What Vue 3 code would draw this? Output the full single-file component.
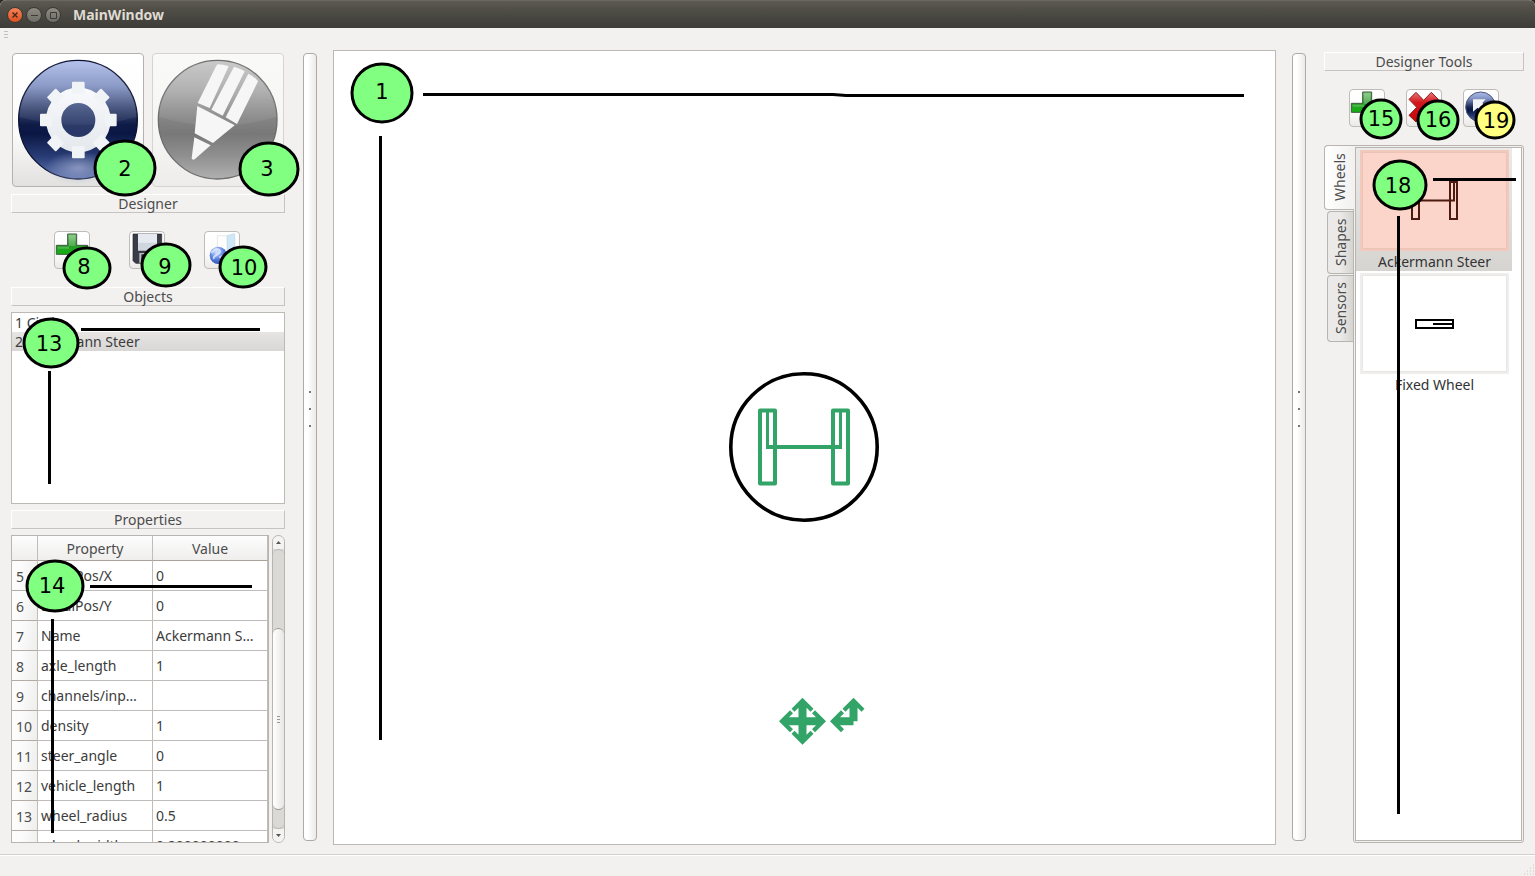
<script setup>
import { ref } from 'vue'

const objects = ['1 Circle', '2 Ackermann Steer']
const selectedObject = ref(1)

const properties = [
  { id: 5, name: 'LocalPos/X', value: '0' },
  { id: 6, name: 'LocalPos/Y', value: '0' },
  { id: 7, name: 'Name', value: 'Ackermann S…' },
  { id: 8, name: 'axle_length', value: '1' },
  { id: 9, name: 'channels/inp…', value: '' },
  { id: 10, name: 'density', value: '1' },
  { id: 11, name: 'steer_angle', value: '0' },
  { id: 12, name: 'vehicle_length', value: '1' },
  { id: 13, name: 'wheel_radius', value: '0.5' },
  { id: 14, name: 'wheel_width', value: '0.200000000' },
]

const tabs = ['Wheels', 'Shapes', 'Sensors']
const activeTab = ref('Wheels')

/* Callouts: n = number, x/y = centre, rx/ry = radii, tx/ty = number position */
const leftNotes = [
  { n: 2, x: 125, y: 168, rx: 30, ry: 27, tx: 125, ty: 176 },
  { n: 3, x: 269, y: 169, rx: 29, ry: 26, tx: 267, ty: 176 },
  { n: 8, x: 87, y: 268, rx: 23, ry: 20, tx: 84, ty: 274 },
  { n: 9, x: 166, y: 265, rx: 24, ry: 21, tx: 165, ty: 274 },
  { n: 10, x: 243, y: 267, rx: 23, ry: 20, tx: 244, ty: 275 },
  { n: 13, x: 51, y: 343, rx: 27, ry: 24, tx: 49, ty: 351 },
  { n: 14, x: 55, y: 586, rx: 28, ry: 25, tx: 52, ty: 593 },
]
const leftLines = ['M81 329.5H260', 'M49.5 371V484', 'M90 586.5H252', 'M52.5 619V833']
const canvasNotes = [{ n: 1, x: 382, y: 93, rx: 30, ry: 29, tx: 382, ty: 99 }]
const canvasLines = ['M423 94.5H833L846 95.5H1244', 'M380.5 136V740']
const rightNotes = [
  { n: 15, x: 1381, y: 119, rx: 20, ry: 19, tx: 1381, ty: 126 },
  { n: 16, x: 1438, y: 120, rx: 20, ry: 19, tx: 1438, ty: 127 },
  { n: 19, x: 1495, y: 120, rx: 19, ry: 18, tx: 1496, ty: 128, yellow: true },
  { n: 18, x: 1400, y: 185, rx: 26, ry: 24, tx: 1398, ty: 193 },
]
const rightLines = ['M1433 179.5H1516', 'M1398.5 216V814']
const teeth = [0, 45, 90, 135, 180, 225, 270, 315]
</script>

<template>
  <div class="window">
    <svg width="0" height="0" class="defs" aria-hidden="true">
      <defs>
        <linearGradient id="blueBall" x1="0" y1="0" x2="0" y2="1">
          <stop offset="0" stop-color="#b0bfeb" />
          <stop offset="0.22" stop-color="#8292c2" />
          <stop offset="0.42" stop-color="#36446f" />
          <stop offset="0.54" stop-color="#0f1c48" />
          <stop offset="0.62" stop-color="#0a1744" />
          <stop offset="0.82" stop-color="#2b3e78" />
          <stop offset="1" stop-color="#5f76b2" />
        </linearGradient>
        <radialGradient id="glow">
          <stop offset="0" stop-color="#a3aed0" stop-opacity="0.7" />
          <stop offset="1" stop-color="#a3aed0" stop-opacity="0" />
        </radialGradient>
        <linearGradient id="greyBall" x1="0" y1="0" x2="0" y2="1">
          <stop offset="0" stop-color="#c6c6c6" />
          <stop offset="0.25" stop-color="#acacac" />
          <stop offset="0.5" stop-color="#838383" />
          <stop offset="0.62" stop-color="#787878" />
          <stop offset="0.8" stop-color="#8f8f8f" />
          <stop offset="1" stop-color="#b0b0b0" />
        </linearGradient>
        <linearGradient id="whiteFade" gradientUnits="userSpaceOnUse" x1="0" y1="86" x2="0" y2="316">
          <stop offset="0" stop-color="#fafbfe" />
          <stop offset="1" stop-color="#e2e6ea" />
        </linearGradient>
        <linearGradient id="greenFade" x1="0" y1="0" x2="0" y2="1">
          <stop offset="0" stop-color="#7cc47a" />
          <stop offset="0.35" stop-color="#2c9a2c" />
          <stop offset="0.6" stop-color="#12b012" />
          <stop offset="1" stop-color="#0a7d0a" />
        </linearGradient>
        <linearGradient id="redFade" x1="0" y1="0" x2="0" y2="1">
          <stop offset="0" stop-color="#e8777a" />
          <stop offset="0.35" stop-color="#d3161b" />
          <stop offset="1" stop-color="#c4060b" />
        </linearGradient>
        <radialGradient id="globe" cx="0.4" cy="0.3" r="0.8">
          <stop offset="0" stop-color="#dbe7ff" />
          <stop offset="0.5" stop-color="#5b83e0" />
          <stop offset="1" stop-color="#1c3fae" />
        </radialGradient>
        <g id="plusIcon">
          <path d="M41 9h27v34h33v27H68v33H41V70H7V43h34z" fill="url(#greenFade)" stroke="#3b5a3b" stroke-width="3" stroke-linejoin="round" />
          <path d="M45 13h19v32H45zM11 47h34v6H11z" fill="#fff" opacity="0.2" />
        </g>
        <g id="arrowHead">
          <path d="M0 -23.5L11 -12.5L8 -9.5L4 -13.5V0H-4V-13.5L-8 -9.5L-11 -12.5Z" />
        </g>
      </defs>
    </svg>

    <header class="titlebar">
      <button class="wm close" aria-label="Close">
        <svg width="14" height="14" viewBox="0 0 14 14"><path d="M4.500 4.500l5 5M9.500 4.500l-5 5" stroke="#4e2a1a" stroke-width="1.500" /></svg>
      </button>
      <button class="wm" aria-label="Minimize">
        <svg width="14" height="14" viewBox="0 0 14 14"><path d="M4 7.500h7" stroke="#3c3b37" /></svg>
      </button>
      <button class="wm" aria-label="Maximize">
        <svg width="14" height="14" viewBox="0 0 14 14"><path d="M4.500 4.500h6v6h-6z" fill="none" stroke="#3c3b37" /></svg>
      </button>
      <h1>MainWindow</h1>
    </header>

    <div class="toolbar"><span class="grip"><i></i><i></i><i></i></span></div>

    <main class="workspace">
      <section class="left">
        <div class="modes">
          <button class="mode" aria-label="Settings mode">
            <svg viewBox="3 3 390 396">
              <circle cx="198" cy="200" r="178" fill="url(#blueBall)" stroke="#0b1130" stroke-width="4" />
              <path d="M22 192Q198 240 374 192V170Q374 24 198 24T22 170Z" fill="#fff" opacity="0.07" />
              <ellipse cx="198" cy="345" rx="100" ry="50" fill="url(#glow)" />
              <circle cx="199" cy="201" r="52" fill="#5a6a9c" opacity="0.4" />
              <circle cx="199" cy="201" r="74" fill="none" stroke="url(#whiteFade)" stroke-width="46" />
              <rect v-for="t in teeth" :key="t" x="180" y="86" width="38" height="36" rx="3" fill="#f1f4f7" :transform="`rotate(${t} 199 201)`" />
            </svg>
          </button>
          <button class="mode faded" aria-label="Designer mode">
            <svg viewBox="3 3 390 396">
              <circle cx="197" cy="200" r="178" fill="url(#greyBall)" stroke="#6d6d6d" stroke-width="4" />
              <path d="M21 192Q197 244 373 192V170Q372 24 197 24T21 170Z" fill="#fff" opacity="0.07" />
              <g fill="#f6f6f6">
                <path d="M197 34Q213 34 230 40L173 165L137 150L193 38Z" />
                <path d="M246 41Q264 46 278 55L212 188L178 170Z" />
                <path d="M289 62Q307 70 318 85L255 213L221 193Z" />
                <path d="M136 159L248 217L183 270L128 241Z" />
                <path d="M127 253L176 277L128 319Q121 322 119 316Z" />
              </g>
            </svg>
          </button>
        </div>

        <h2 class="caption">Designer</h2>
        <div class="tools">
          <button class="tool" aria-label="New"><svg viewBox="3 3 102 108"><use href="#plusIcon" /></svg></button>
          <button class="tool" aria-label="Save">
            <svg viewBox="3 3 102 108">
              <path d="M12 9h86v88H20l-8-8z" fill="#3a3d47" stroke="#22242b" stroke-width="2" />
              <path d="M27 9h57v50H27z" fill="#d0d6e0" />
              <path d="M27 9h57v26H27z" fill="#e6e9f0" />
              <path d="M31 66h50v31H31z" fill="#b9bec8" />
              <path d="M37 70h13v22H37z" fill="#2a2c33" />
            </svg>
          </button>
          <button class="tool" aria-label="Open">
            <svg viewBox="3 3 102 108">
              <path d="M40 14h30v70H40z" fill="#fdfdfe" stroke="#dcdfe4" stroke-width="2" />
              <path d="M70 14l22-6v70l-22 14z" fill="#cfe8f8" stroke="#b7d7ea" stroke-width="2" />
              <circle cx="43" cy="73" r="26" fill="url(#globe)" />
              <path d="M22 66q12-16 22-10t-4 14t-10 14M46 80q14-8 20 0" fill="none" stroke="#e6eeff" stroke-width="6" opacity="0.75" />
            </svg>
          </button>
        </div>

        <h2 class="caption">Objects</h2>
        <ul class="objects">
          <li v-for="(o, i) in objects" :key="o" :class="{ on: i === selectedObject }" @click="selectedObject = i">{{ o }}</li>
        </ul>

        <h2 class="caption">Properties</h2>
        <div class="props">
          <div class="tablebox">
            <table>
              <colgroup><col class="c0" /><col /><col /></colgroup>
              <thead><tr><th></th><th>Property</th><th>Value</th></tr></thead>
              <tbody>
                <tr v-for="p in properties" :key="p.id"><th>{{ p.id }}</th><td>{{ p.name }}</td><td>{{ p.value }}</td></tr>
              </tbody>
            </table>
          </div>
          <div class="scroll">
            <button class="arrow" aria-label="Scroll up"><svg width="5" height="3" viewBox="0 0 5 3"><path d="M0 3L2.500 0L5 3z" fill="#555" /></svg></button>
            <div class="trough"><div class="thumb"><i></i><i></i><i></i></div></div>
            <button class="arrow" aria-label="Scroll down"><svg width="5" height="3" viewBox="0 0 5 3"><path d="M0 0L2.500 3L5 0z" fill="#555" /></svg></button>
          </div>
        </div>

        <svg class="notes" width="10" height="10" viewBox="11 50 10 10">
          <path v-for="d in leftLines" :key="d" :d="d" />
          <g v-for="c in leftNotes" :key="c.n">
            <ellipse :cx="c.x" :cy="c.y" :rx="c.rx" :ry="c.ry" />
            <text :x="c.tx" :y="c.ty">{{ c.n }}</text>
          </g>
        </svg>
      </section>

      <div class="splitter"><span><i></i><i></i><i></i></span></div>

      <section class="canvas">
        <svg class="scene" width="201" height="601" viewBox="704 147 201 601">
          <circle cx="804" cy="447" r="73.2" fill="none" stroke="#000" stroke-width="3.6" />
          <g fill="none" stroke="#32a467" stroke-width="4" stroke-linejoin="round">
            <path d="M760 410.500h15v73h-15zM833 410.500h15v73h-15z" />
            <path d="M766 447H842" />
            <path d="M767.500 411V449M840.500 411V449" stroke-width="3" />
          </g>
          <g fill="#32a467">
            <g transform="translate(802.500 721.300)">
              <use href="#arrowHead" />
              <use href="#arrowHead" transform="rotate(90)" />
              <use href="#arrowHead" transform="rotate(180)" />
              <use href="#arrowHead" transform="rotate(270)" />
            </g>
            <g transform="translate(853.500 721.300)">
              <use href="#arrowHead" />
              <use href="#arrowHead" transform="rotate(270)" />
            </g>
          </g>
        </svg>
        <svg class="notes" width="10" height="10" viewBox="334 51 10 10">
          <path v-for="d in canvasLines" :key="d" :d="d" />
          <g v-for="c in canvasNotes" :key="c.n">
            <ellipse :cx="c.x" :cy="c.y" :rx="c.rx" :ry="c.ry" />
            <text :x="c.tx" :y="c.ty">{{ c.n }}</text>
          </g>
        </svg>
      </section>

      <div class="splitter"><span><i></i><i></i><i></i></span></div>

      <section class="right">
        <h2 class="caption">Designer Tools</h2>
        <div class="tools narrow">
          <button class="tool" aria-label="Add"><svg viewBox="3 3 102 108"><use href="#plusIcon" /></svg></button>
          <button class="tool" aria-label="Delete">
            <svg viewBox="3 3 102 108">
              <path d="M30 10L53 34L76 10L97 31L74 55L97 79L76 99L53 76L30 99L9 79L32 55L9 31Z" fill="url(#redFade)" stroke="#8c2022" stroke-width="3" stroke-linejoin="round" />
            </svg>
          </button>
          <button class="tool" aria-label="Reset">
            <svg viewBox="3 3 102 108">
              <circle cx="53" cy="54" r="45" fill="url(#blueBall)" stroke="#4a5578" stroke-width="3" />
              <path d="M30 31H68L58 42L74 58L60 72L44 56L30 68Z" fill="#f2f4f8" />
            </svg>
          </button>
        </div>
        <div class="tabbed">
          <div class="tabs" role="tablist">
            <button v-for="t in tabs" :key="t" role="tab" class="tab" :class="[t.toLowerCase(), { on: t === activeTab }]" @click="activeTab = t">{{ t }}</button>
          </div>
          <div class="pane">
            <div class="gallery">
              <figure class="item on">
                <svg class="pic" viewBox="2 2 145 97">
                  <path d="M2.500 2.500h144v96h-144z" fill="none" stroke="#ecc3b5" />
                  <g fill="none" stroke="#4d1a10" stroke-width="2">
                    <path d="M52 32h7v37h-7zM90 32h7v37h-7zM56 32v18.500h38V32" />
                  </g>
                </svg>
                <figcaption>Ackermann Steer</figcaption>
              </figure>
              <figure class="item">
                <svg class="pic" viewBox="2 2 145 97">
                  <path d="M2.500 2.500h144v96h-144z" fill="none" stroke="#e8e6e4" />
                  <path d="M56 47h37v8H56zM73 51h20" fill="none" stroke="#000" stroke-width="2" />
                </svg>
                <figcaption>Fixed Wheel</figcaption>
              </figure>
            </div>
          </div>
        </div>

        <svg class="notes" width="10" height="10" viewBox="1324 50 10 10">
          <path v-for="d in rightLines" :key="d" :d="d" />
          <g v-for="c in rightNotes" :key="c.n">
            <ellipse :cx="c.x" :cy="c.y" :rx="c.rx" :ry="c.ry" :class="{ yellow: c.yellow }" />
            <text :x="c.tx" :y="c.ty">{{ c.n }}</text>
          </g>
        </svg>
      </section>
    </main>

    <footer class="status">
      <svg width="12" height="12" viewBox="0 0 12 12"><path d="M10 1h1M10 4h1M7 4h1M10 7h1M7 7h1M4 7h1M10 10h1M7 10h1M4 10h1M1 10h1" stroke="#c9c6c2" /></svg>
    </footer>
  </div>
</template>

<style>
body { background: #2b2a27; }
</style>

<style scoped>
* { box-sizing: border-box; }
button { font: inherit; color: inherit; padding: 0; cursor: pointer; }
.window {
  display: flex; flex-direction: column; height: 100vh; overflow: hidden;
  background: #f2f1f0; color: #3c3c3c; border-radius: 6px 6px 0 0;
  font: 14px/18px "Noto Sans", "Open Sans", sans-serif;
}
.defs { position: absolute; }
.titlebar {
  flex: none; height: 28px; display: flex; align-items: center; gap: 3px; padding-left: 7px;
  background: linear-gradient(#5d5a53, #504e47 30%, #3d3c38); border-top: 1px solid #6b6860;
}
.titlebar h1 { margin: 0 0 0 9px; font-size: 14px; line-height: 18px; font-weight: 700; color: #dfdbd2; }
.wm { width: 16px; height: 16px; border: 1px solid #3a3935; border-radius: 50%; background: linear-gradient(#8e8b83, #706d66); }
.wm svg { display: block; }
.close { background: linear-gradient(#f5835a, #e0501f); }
.toolbar { flex: none; height: 22px; padding: 3px 4px; }
.grip { display: flex; flex-direction: column; gap: 2px; width: 4px; }
.grip i { height: 1px; background: #c4c1bd; }
.workspace { flex: 1; min-height: 0; display: flex; padding: 0 11px 9px; }
.left { position: relative; flex: none; width: 274px; display: flex; flex-direction: column; padding: 3px 0 2px; }
.modes { display: flex; justify-content: space-between; padding: 0 1px; margin-bottom: 7px; }
.mode { width: 132px; height: 134px; border: 1px solid #b5b2ae; border-radius: 4px; background: linear-gradient(#fff, #fbfbfb 60%, #e2e1df); overflow: hidden; }
.mode svg { display: block; width: 130px; height: 132px; }
.faded { border-color: #d6d4d1; background: linear-gradient(#f9f9f8, #f6f6f5 60%, #edecea); }
.caption {
  flex: none; margin: 0; height: 19px; border: 1px solid; border-color: #fff #c6c3c0 #c6c3c0 #fff;
  font-size: 14px; line-height: 18px; font-weight: 400; text-align: center; color: #4c4c4c;
}
.tools { display: flex; justify-content: center; gap: 39px; margin: 18px 2px 18px 0; }
.narrow { gap: 21px; margin-right: 0; }
.tool { width: 36px; height: 38px; border: 1px solid #bebbb8; border-radius: 4px; background: linear-gradient(#fff, #fbfbfb 60%, #eceae8); overflow: hidden; }
.tool svg { display: block; width: 34px; height: 36px; }
.objects { flex: none; height: 192px; margin: 6px 0; padding: 0; list-style: none; background: #fff; border: 1px solid #bcb8b4; }
.objects li { height: 19px; line-height: 20px; padding-left: 3px; cursor: default; }
.objects .on { background: linear-gradient(#e6e5e4, #d9d7d5); }
.props { flex: 1; min-height: 0; display: flex; justify-content: space-between; margin-top: 6px; }
.tablebox { width: 258px; overflow: hidden; background: #fff; border: 1px solid #b8b4b0; }
table { width: 100%; border-collapse: separate; border-spacing: 0; table-layout: fixed; }
.c0 { width: 26px; }
th, td { height: 30px; padding: 0 3px; border: solid #bfbcb9; border-width: 0 1px 1px 0; text-align: left; font-weight: 400; white-space: nowrap; overflow: hidden; }
thead th { height: 25px; padding: 1px 0 0; text-align: center; color: #4c4c4c; background: linear-gradient(#fdfdfd, #efeeed); border-bottom-color: #aaa39c; }
tbody th { padding: 2px 0 0 4px; color: #4c4c4c; background: linear-gradient(100deg, #fcfcfc 30%, #efeeed); border-bottom-color: #b3aca5; }
.scroll { width: 13px; display: flex; flex-direction: column; border: 1px solid #b8b4b0; border-radius: 7px; background: #dbd9d6; overflow: hidden; }
.arrow { flex: none; height: 13px; border: 0; background: #f4f3f2; display: grid; place-items: center; }
.trough { flex: 1; display: flex; flex-direction: column; justify-content: flex-end; padding-bottom: 18px; border: solid #b8b4b0; border-width: 1px 0; border-radius: 6px; }
.thumb { height: 70%; border: solid #9c9894; border-width: 1px 0; border-radius: 6px; background: linear-gradient(90deg, #fff, #e8e6e4); display: flex; flex-direction: column; align-items: center; justify-content: center; gap: 2px; }
.thumb i { width: 3px; height: 1px; background: #9c9894; }
.splitter { position: relative; flex: none; width: 14px; margin: 3px 16px 4px 18px; border: 1px solid #aeaaa6; border-radius: 4px; background: linear-gradient(90deg, #fff 30%, #eceae8); }
.canvas + .splitter { margin: 3px 18px 4px 16px; }
.splitter span { position: absolute; top: 43%; left: 5px; margin-top: -1px; display: flex; flex-direction: column; gap: 15px; }
.splitter i { width: 2px; height: 2px; background: #777; }
.canvas { position: relative; flex: 1; min-width: 0; display: flex; align-items: center; justify-content: center; background: #fff; border: 1px solid #bcb8b4; }
.scene { flex: none; }
.right { position: relative; flex: none; width: 200px; display: flex; flex-direction: column; padding: 2px 0; }
.tabbed { flex: 1; min-height: 0; display: flex; }
.tabs { flex: none; width: 29px; display: flex; flex-direction: column; align-items: flex-end; gap: 1px; }
.tab { width: 26px; height: 63px; border: 1px solid #b8b4b0; border-left: 0; border-radius: 0 4px 4px 0; background: linear-gradient(90deg, #d6d4d1, #ebeae8 50%); writing-mode: vertical-rl; transform: rotate(180deg); color: #4c4c4c; }
.wheels { height: 65px; }
.sensors { height: 67px; }
.tab.on { position: relative; z-index: 1; width: 30px; margin-right: -1px; background: linear-gradient(90deg, #f2f1f0, #fff); }
.pane { flex: 1; padding: 1px; border: 1px solid #b8b4b0; border-radius: 0 3px 3px 3px; }
.gallery { height: 100%; background: #fff; border: 1px solid #b8b4b0; }
.item { margin: 0; width: 156px; height: 123px; padding: 2px 3px 0 4px; text-align: center; color: #333; }
.item.on { background: linear-gradient(#eceae9, #d6d4d1); }
.pic { display: block; width: 149px; height: 101px; margin-bottom: 2px; border: 2px solid #efeeed; background: #fff; }
.on .pic { background: #fbd5c9; border-color: #f2cabd; }
.notes { position: absolute; left: 0; top: 0; z-index: 2; overflow: visible; pointer-events: none; }
.notes path { fill: none; stroke: #000; stroke-width: 3; }
.notes ellipse { fill: #80ff80; stroke: #000; stroke-width: 3; }
.notes .yellow { fill: #ffff80; }
.notes text { font: 21px "DejaVu Sans", sans-serif; fill: #000; text-anchor: middle; }
.status { flex: none; height: 22px; display: flex; justify-content: flex-end; align-items: flex-end; border-top: 1px solid #d3d0cd; box-shadow: inset 0 1px #fff; }
</style>
